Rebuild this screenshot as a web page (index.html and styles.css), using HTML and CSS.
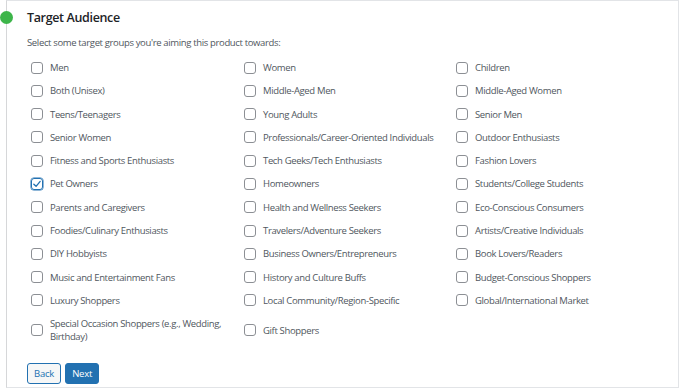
FILE: index.html
```html
<!DOCTYPE html>
<html>
<head>
<meta charset="utf-8">
<link rel="stylesheet" href="styles.css">
</head>
<body>
<div class="step">
  <span class="dot"></span>
  <div class="content">
    <h2 class="title">Target Audience</h2>
    <p class="desc">Select some target groups you're aiming this product towards:</p>
    <div class="options">
      <label class="opt"><span class="box"></span><span class="txt">Men</span></label>
      <label class="opt"><span class="box"></span><span class="txt">Women</span></label>
      <label class="opt"><span class="box"></span><span class="txt">Children</span></label>
      <label class="opt"><span class="box"></span><span class="txt">Both (Unisex)</span></label>
      <label class="opt"><span class="box"></span><span class="txt">Middle-Aged Men</span></label>
      <label class="opt"><span class="box"></span><span class="txt">Middle-Aged Women</span></label>
      <label class="opt"><span class="box"></span><span class="txt">Teens/Teenagers</span></label>
      <label class="opt"><span class="box"></span><span class="txt">Young Adults</span></label>
      <label class="opt"><span class="box"></span><span class="txt">Senior Men</span></label>
      <label class="opt"><span class="box"></span><span class="txt">Senior Women</span></label>
      <label class="opt"><span class="box"></span><span class="txt">Professionals/Career-Oriented Individuals</span></label>
      <label class="opt"><span class="box"></span><span class="txt">Outdoor Enthusiasts</span></label>
      <label class="opt"><span class="box"></span><span class="txt">Fitness and Sports Enthusiasts</span></label>
      <label class="opt"><span class="box"></span><span class="txt">Tech Geeks/Tech Enthusiasts</span></label>
      <label class="opt"><span class="box"></span><span class="txt">Fashion Lovers</span></label>
      <label class="opt"><span class="box checked"><svg viewBox="0 0 12 12" width="10" height="10"><path d="M2.2 6.2 L4.9 8.8 L9.8 2.9" fill="none" stroke="#2271b1" stroke-width="1.6" stroke-linecap="round" stroke-linejoin="round"/></svg></span><span class="txt">Pet Owners</span></label>
      <label class="opt"><span class="box"></span><span class="txt">Homeowners</span></label>
      <label class="opt"><span class="box"></span><span class="txt">Students/College Students</span></label>
      <label class="opt"><span class="box"></span><span class="txt">Parents and Caregivers</span></label>
      <label class="opt"><span class="box"></span><span class="txt">Health and Wellness Seekers</span></label>
      <label class="opt"><span class="box"></span><span class="txt">Eco-Conscious Consumers</span></label>
      <label class="opt"><span class="box"></span><span class="txt">Foodies/Culinary Enthusiasts</span></label>
      <label class="opt"><span class="box"></span><span class="txt">Travelers/Adventure Seekers</span></label>
      <label class="opt"><span class="box"></span><span class="txt">Artists/Creative Individuals</span></label>
      <label class="opt"><span class="box"></span><span class="txt">DIY Hobbyists</span></label>
      <label class="opt"><span class="box"></span><span class="txt">Business Owners/Entrepreneurs</span></label>
      <label class="opt"><span class="box"></span><span class="txt">Book Lovers/Readers</span></label>
      <label class="opt"><span class="box"></span><span class="txt">Music and Entertainment Fans</span></label>
      <label class="opt"><span class="box"></span><span class="txt">History and Culture Buffs</span></label>
      <label class="opt"><span class="box"></span><span class="txt">Budget-Conscious Shoppers</span></label>
      <label class="opt"><span class="box"></span><span class="txt">Luxury Shoppers</span></label>
      <label class="opt"><span class="box"></span><span class="txt">Local Community/Region-Specific</span></label>
      <label class="opt"><span class="box"></span><span class="txt">Global/International Market</span></label>
      <label class="opt"><span class="box"></span><span class="txt">Special Occasion Shoppers (e.g., Wedding, Birthday)</span></label>
      <label class="opt"><span class="box"></span><span class="txt">Gift Shoppers</span></label>
    </div>
    <div class="actions">
      <button class="btn back">Back</button>
      <button class="btn next">Next</button>
    </div>
  </div>
</div>
</body>
</html>
```
FILE: styles.css
```css
html, body {
  margin: 0;
  padding: 0;
  background: #ffffff;
}
body {
  font-family: "Open Sans", "Noto Sans", sans-serif;
  color: #50575e;
  width: 680px;
  height: 388px;
  overflow: hidden;
}
.step {
  position: relative;
  margin: 0 1px 0 6px;
  height: 386px;
  border-top: 1px solid #e2e4e7;
  border-right: 1px solid #e2e4e7;
  border-bottom: 1px solid #e2e4e7;
  border-left: 1px solid #d6d7d9;
  box-sizing: content-box;
}
.dot {
  position: absolute;
  left: -7px;
  top: 10px;
  width: 13px;
  height: 13px;
  border-radius: 50%;
  background: #3db54a;
}
.content {
  padding: 8px 0 0 20px;
}
.title {
  margin: 0;
  font-size: 12.5px;
  font-weight: 600;
  letter-spacing: -0.35px;
  line-height: 18px;
  color: #1d2327;
}
.desc {
  margin: 9px 0 0 0;
  font-size: 9.5px;
  letter-spacing: -0.35px;
  line-height: 14px;
}
.options {
  margin: 8px 0 0 4px;
  display: grid;
  grid-template-columns: 213px 212px 1fr;
  row-gap: 4.3px;
}
.opt {
  display: flex;
  align-items: center;
  gap: 5px;
  padding: 3px 0;
  min-height: 13px;
  font-size: 9.5px;
  letter-spacing: -0.35px;
  line-height: 13px;
}
.txt {
  max-width: 180px;
}
.box {
  flex: none;
  width: 10px;
  height: 10px;
  border: 1px solid #8c8f94;
  border-radius: 3px;
  display: flex;
  align-items: center;
  justify-content: center;
  margin-right: 2px;
}
.box.checked {
  border-color: #2271b1;
  box-shadow: 0 0 0 0.5px #2271b1;
}
.actions {
  margin-top: 17px;
  display: flex;
  gap: 4px;
}
.btn {
  font-family: "Open Sans", "Noto Sans", sans-serif;
  font-size: 9.5px;
  letter-spacing: -0.2px;
  height: 21px;
  padding: 0 6px;
  border-radius: 3px;
  border: 1px solid #2271b1;
  cursor: pointer;
}
.back {
  background: #f6f7f7;
  color: #2271b1;
}
.next {
  background: #2271b1;
  color: #ffffff;
}
```
